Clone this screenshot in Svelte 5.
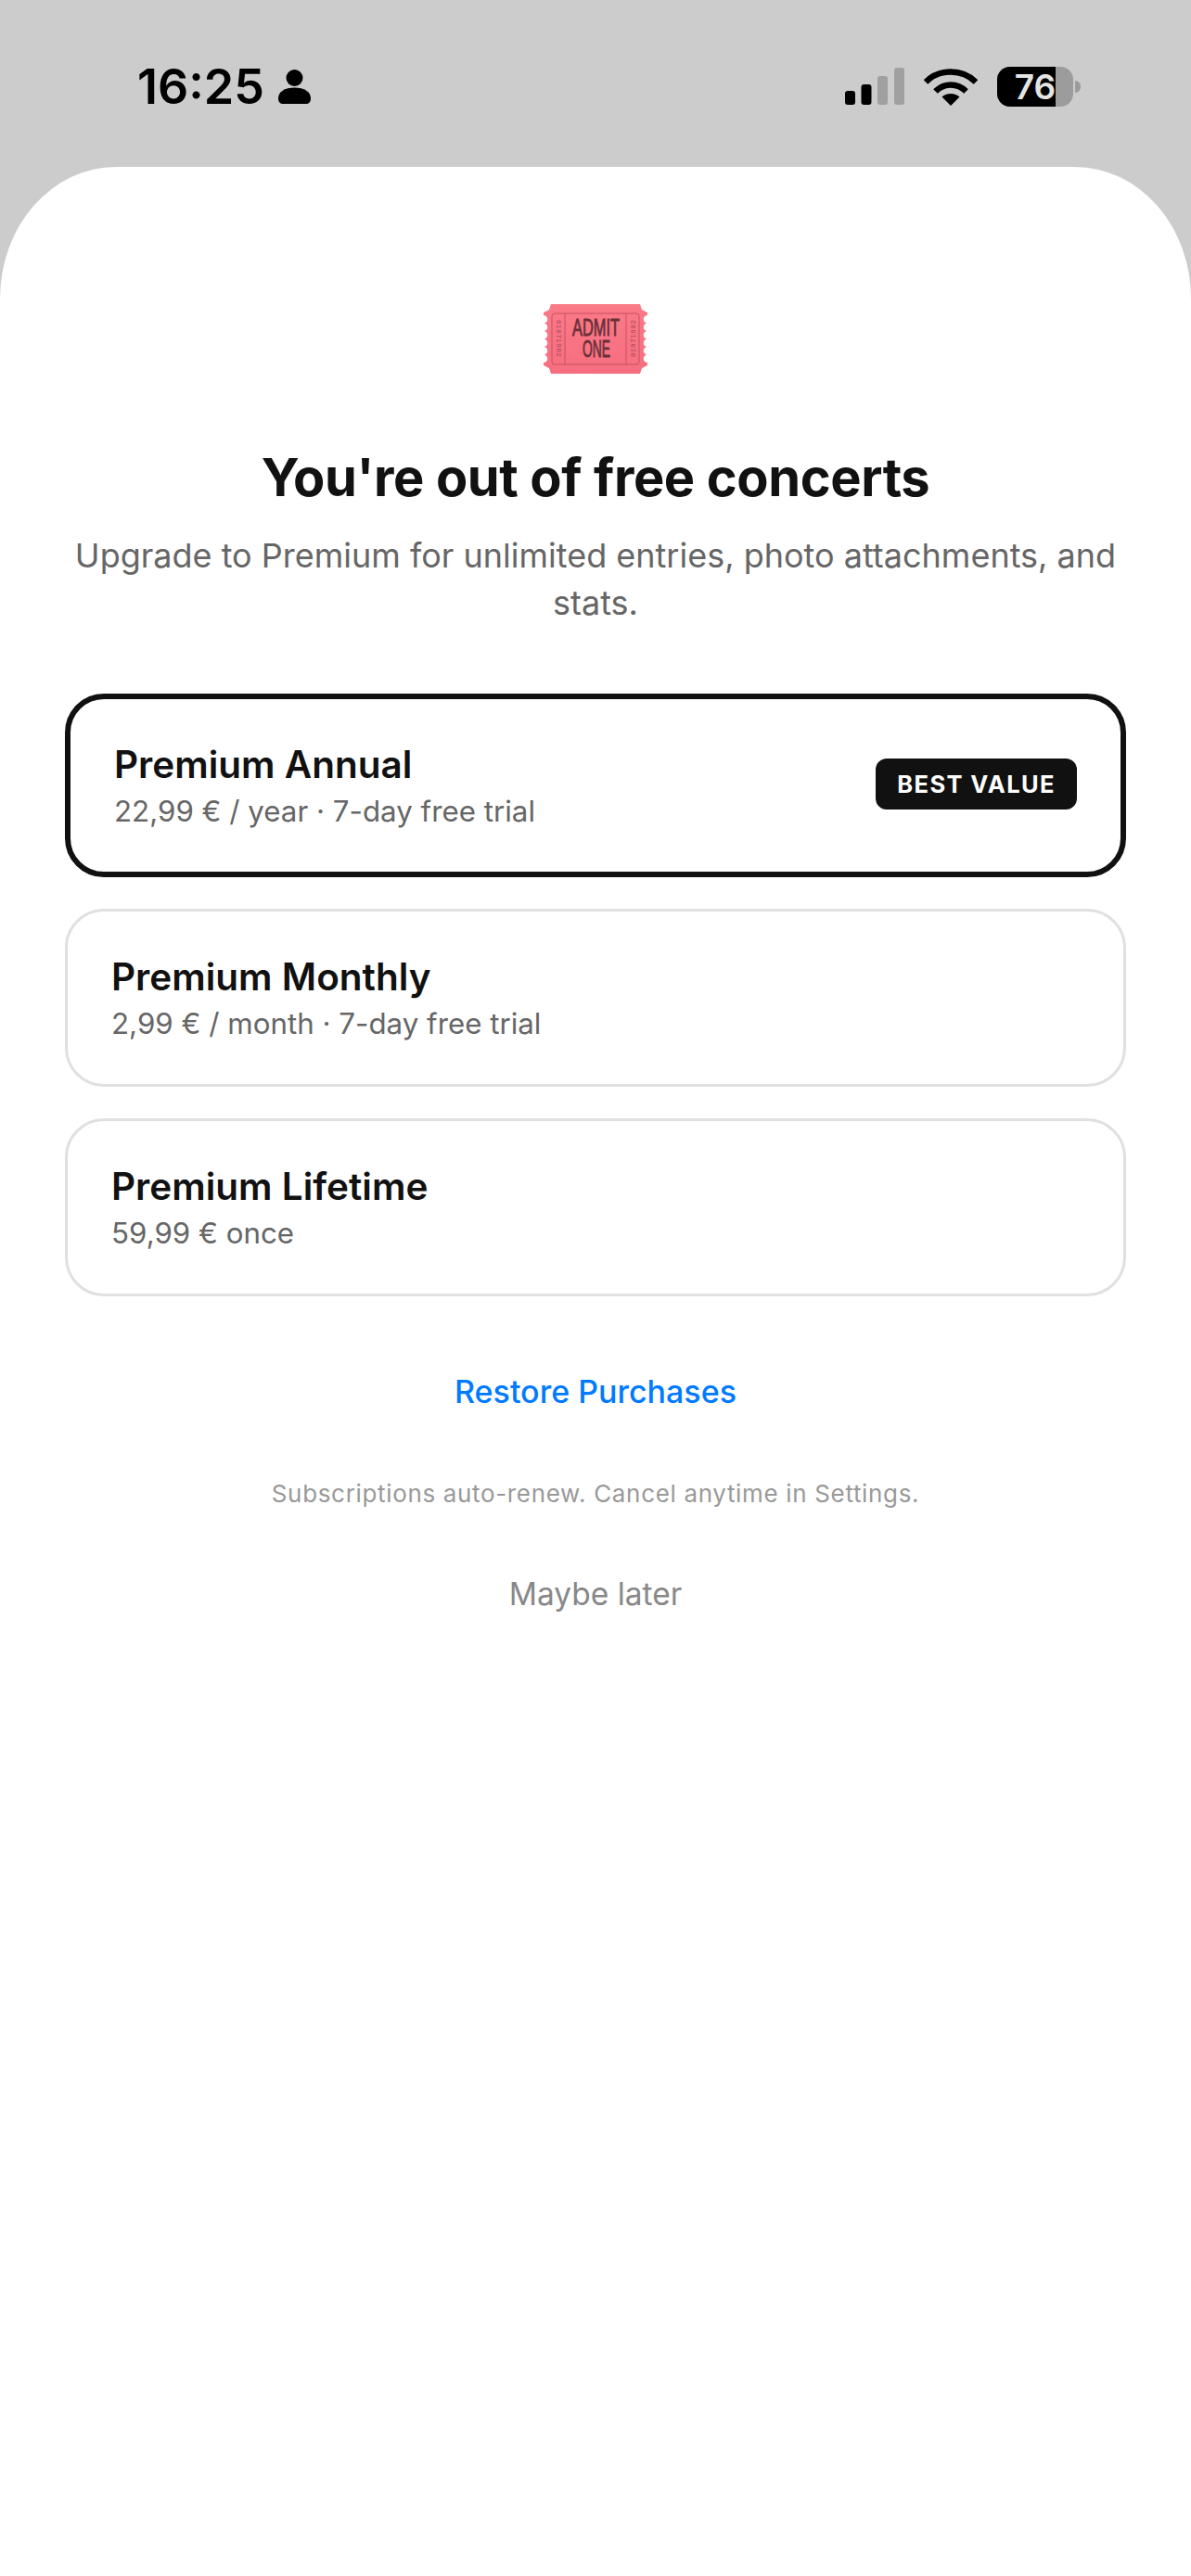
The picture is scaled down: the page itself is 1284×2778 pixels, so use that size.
<script>
  const plans = [
    { name: 'Premium Annual', price: '22,99 € / year · 7-day free trial', selected: true, badge: 'BEST VALUE' },
    { name: 'Premium Monthly', price: '2,99 € / month · 7-day free trial' },
    { name: 'Premium Lifetime', price: '59,99 € once' }
  ];

  // ticket outline: scalloped short sides, clipped corners
  function ticketPath() {
    const notches = 6;
    const step = 8.5;
    const top = 12;
    let d = `M8 0H104L106 6L112 9V${top}`;
    for (let i = 0; i < notches; i++) d += `a3 3 0 0 0 0 ${step}`;
    d += `L112 66L106 69L104 75H8L6 69L0 66V${top + notches * step}`;
    for (let i = 0; i < notches; i++) d += `a3 3 0 0 0 0 -${step}`;
    d += 'V9L6 6Z';
    return d;
  }
</script>

<div class="page">
  <header class="status">
    <div class="left">
      <span class="time">16:25</span>
      <svg class="person" width="35" height="37" viewBox="0 0 35 37" aria-hidden="true">
        <circle cx="17.500" cy="9" r="9" fill="#000"/>
        <path d="M0 31c0-7 7-11.500 17.500-11.500S35 24 35 31c0 4-2 6-5.500 6h-24C2 37 0 35 0 31z" fill="#000"/>
      </svg>
    </div>
    <div class="right">
      <svg width="66" height="42" viewBox="0 0 66 42" aria-hidden="true">
        <rect x="1" y="25" width="11" height="15" rx="3" fill="#000"/>
        <rect x="18.500" y="18" width="11" height="22" rx="3" fill="#000"/>
        <rect x="36" y="9" width="11" height="31" rx="3" fill="#a0a0a0"/>
        <rect x="54" y="0" width="11" height="40" rx="3" fill="#a0a0a0"/>
      </svg>
      <svg class="wifi" width="58" height="42" viewBox="0 0 58 42" aria-hidden="true">
        <path d="M2 15.500C9 8.500 18.500 4.500 29 4.500S49 8.500 56 15.500" fill="none" stroke="#000" stroke-width="6.500"/>
        <path d="M12.500 25.500C17 21 22.800 18.500 29 18.500S41 21 45.500 25.500" fill="none" stroke="#000" stroke-width="6.500"/>
        <path d="M19.500 31.500C22 29.300 25.300 28 29 28s7 1.300 9.500 3.500L29 41z" fill="#000"/>
      </svg>
      <div class="battery">
        <div class="cell">
          <div class="fill"></div>
          <span class="level">76</span>
        </div>
        <div class="nub"></div>
      </div>
    </div>
  </header>

  <main class="sheet">
    <svg class="ticket" width="112" height="75" viewBox="0 0 112 75" aria-label="Admit one ticket">
      <defs>
        <linearGradient id="ticketFill" x1="0" y1="0" x2="0" y2="1">
          <stop offset="0" stop-color="#fb7a88"/>
          <stop offset="1" stop-color="#f66e80"/>
        </linearGradient>
      </defs>
      <path d={ticketPath()} fill="url(#ticketFill)"/>
      <rect x="9" y="10" width="94" height="55" rx="3" fill="none" stroke="#c9505f" stroke-width="1"/>
      <path d="M23 10v55M89 10v55" stroke="#c9505f" stroke-width="1"/>
      <text class="admit" x="31" y="34" textLength="51" lengthAdjust="spacingAndGlyphs">ADMIT</text>
      <text class="admit" x="42" y="57" textLength="30" lengthAdjust="spacingAndGlyphs">ONE</text>
      <text class="serial" transform="translate(13.500 17) rotate(90)" textLength="40">01071982</text>
      <text class="serial" transform="translate(98.500 57) rotate(-90)" textLength="40">01071982</text>
    </svg>

    <h1>You're out of free concerts</h1>
    <p class="lead">Upgrade to Premium for unlimited entries, photo attachments, and stats.</p>

    <div class="plans">
      {#each plans as plan}
        <div class="plan" class:selected={plan.selected}>
          <div class="info">
            <div class="name">{plan.name}</div>
            <div class="price">{plan.price}</div>
          </div>
          {#if plan.badge}
            <span class="badge">{plan.badge}</span>
          {/if}
        </div>
      {/each}
    </div>

    <div class="restore">Restore Purchases</div>
    <div class="legal">Subscriptions auto-renew. Cancel anytime in Settings.</div>
    <div class="later">Maybe later</div>
  </main>
</div>

<style>
  :global(body) {
    margin: 0;
    background: #fff;
  }

  .page {
    width: 1284px;
    height: 2778px;
    overflow: hidden;
    background: #cccccc;
    font-family: Inter, "Noto Sans", sans-serif;
  }

  /* ── Status bar ── */
  .status {
    height: 180px;
    box-sizing: border-box;
    padding: 72px 119px 0 148px;
    display: flex;
    justify-content: space-between;
    align-items: flex-start;
  }

  .left {
    height: 43px;
    display: flex;
    align-items: center;
    gap: 15px;
  }

  .time {
    font-size: 52px;
    line-height: 48px;
    font-weight: 600;
    color: #000;
  }

  .right {
    display: flex;
    align-items: center;
    gap: 20px;
  }

  .battery {
    display: flex;
    align-items: center;
    gap: 2px;
    margin-left: 1px;
  }

  .cell {
    position: relative;
    width: 82px;
    height: 43px;
    border-radius: 14px;
    background: #9c9c9c;
  }

  .fill {
    width: 63px;
    height: 100%;
    border-radius: 14px 0 0 14px;
    background: #000;
  }

  .level {
    position: absolute;
    inset: 0;
    text-align: center;
    font-size: 37px;
    line-height: 43px;
    font-weight: 600;
    color: #e4e4e4;
  }

  .nub {
    width: 6px;
    height: 13px;
    border-radius: 0 6px 6px 0;
    background: #9c9c9c;
  }

  /* ── Sheet ── */
  .sheet {
    height: 2598px;
    box-sizing: border-box;
    padding: 148px 70px 0;
    background: #fff;
    border-radius: 125px 125px 0 0 / 142px 142px 0 0;
    display: flex;
    flex-direction: column;
    align-items: center;
  }

  .ticket {
    flex-shrink: 0;
    display: block;
  }

  .admit {
    font-size: 25px;
    font-family: "Liberation Sans", sans-serif;
    fill: #6a3038;
    stroke: #6a3038;
    stroke-width: 0.8px;
  }

  .serial {
    font-size: 7.500px;
    font-family: "Liberation Mono", monospace;
    fill: #a84656;
  }

  h1 {
    margin: 77px 0 0;
    font-size: 56px;
    line-height: 70px;
    font-weight: 700;
    color: #111;
    text-align: center;
    letter-spacing: -0.4px;
  }

  .lead {
    margin: 24px 0 0;
    font-size: 36px;
    line-height: 51px;
    color: #666;
    text-align: center;
  }

  .plans {
    width: 100%;
    margin-top: 72px;
    display: flex;
    flex-direction: column;
    gap: 34px;
  }

  .plan {
    height: 192px;
    box-sizing: border-box;
    padding: 0 48px 0 47px;
    border: 3px solid #e0e0e0;
    border-radius: 42px;
    display: flex;
    align-items: center;
    justify-content: space-between;
  }

  .plan.selected {
    height: 198px;
    padding: 0 47px 0 47px;
    border: 6px solid #111;
  }

  .name {
    font-size: 40.500px;
    line-height: 52px;
    font-weight: 600;
    color: #111;
  }

  .price {
    margin-top: 3px;
    font-size: 31.300px;
    line-height: 42px;
    color: #666;
  }

  .badge {
    margin-top: -3px;
    padding: 0 23px;
    height: 55px;
    line-height: 55px;
    border-radius: 12px;
    background: #111;
    color: #fff;
    font-size: 25.500px;
    font-weight: 700;
    letter-spacing: 1.400px;
  }

  .restore {
    margin-top: 80px;
    font-size: 34px;
    line-height: 46px;
    font-weight: 500;
    color: #007aff;
  }

  .legal {
    margin-top: 70px;
    font-size: 26px;
    line-height: 34px;
    letter-spacing: 0.66px;
    color: #999;
  }

  .later {
    margin-top: 68px;
    font-size: 33.500px;
    line-height: 46px;
    color: #888;
  }
</style>
